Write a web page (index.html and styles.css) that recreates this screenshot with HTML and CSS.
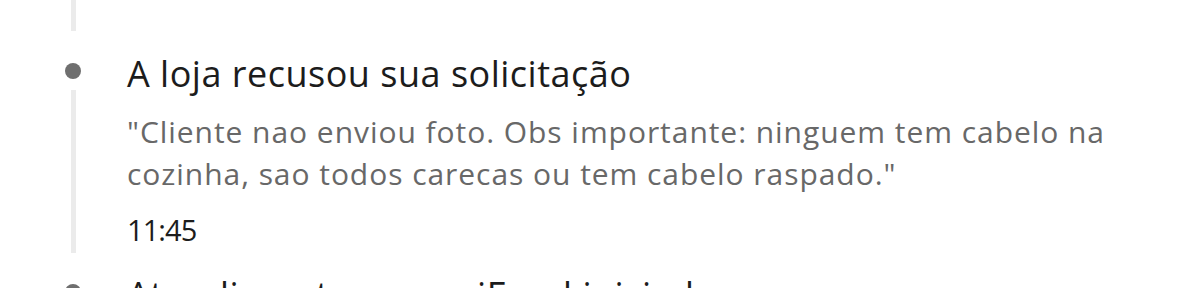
FILE: index.html
```html
<!DOCTYPE html>
<html lang="pt-BR">
<head>
<meta charset="utf-8">
<link rel="stylesheet" href="styles.css">
</head>
<body>
<div class="timeline">
  <div class="item item-tail">
    <div class="rail"><div class="line"></div></div>
  </div>
  <div class="item">
    <div class="rail"><div class="dot"></div><div class="line"></div></div>
    <div class="content">
      <div class="title">A loja recusou sua solicitação</div>
      <div class="desc">"Cliente nao enviou foto. Obs importante: ninguem tem cabelo na cozinha, sao todos carecas ou tem cabelo raspado."</div>
      <div class="time">11:45</div>
    </div>
  </div>
  <div class="item">
    <div class="rail"><div class="dot"></div><div class="line"></div></div>
    <div class="content">
      <div class="title">Atendimento com o iFood iniciado</div>
    </div>
  </div>
</div>
</body>
</html>
```
FILE: styles.css
```css
html, body {
  margin: 0;
  padding: 0;
  background: #ffffff;
}
body {
  font-family: "Open Sans", "Noto Sans", sans-serif;
  width: 1199px;
  height: 288px;
  overflow: hidden;
}
.timeline {
  display: flex;
  flex-direction: column;
}
.item {
  display: flex;
}
.item-tail {
  height: 53px;
}
.item-tail .line {
  margin-top: 0;
  margin-bottom: 22px;
}
.rail {
  width: 127px;
  flex: none;
  display: flex;
  flex-direction: column;
  padding-left: 65px;
  box-sizing: border-box;
}
.dot {
  width: 16px;
  height: 16px;
  border-radius: 50%;
  background: #6f6f6f;
  margin-top: 10px;
}
.line {
  flex: 1;
  width: 5px;
  margin-left: 6px;
  margin-top: 11px;
  margin-bottom: 21px;
  background: #ebebeb;
}
.content {
  flex: 1;
  min-width: 0;
  padding-right: 64px;
}
.title {
  font-size: 36px;
  line-height: 42px;
  letter-spacing: 0.5px;
  color: #1c1c1c;
}
.desc {
  margin-top: 16px;
  font-size: 30px;
  line-height: 42px;
  letter-spacing: 0.95px;
  color: #686868;
}
.time {
  margin-top: 14px;
  font-size: 29px;
  line-height: 42px;
  letter-spacing: -0.9px;
  color: #1c1c1c;
  margin-bottom: 23px;
}
```
